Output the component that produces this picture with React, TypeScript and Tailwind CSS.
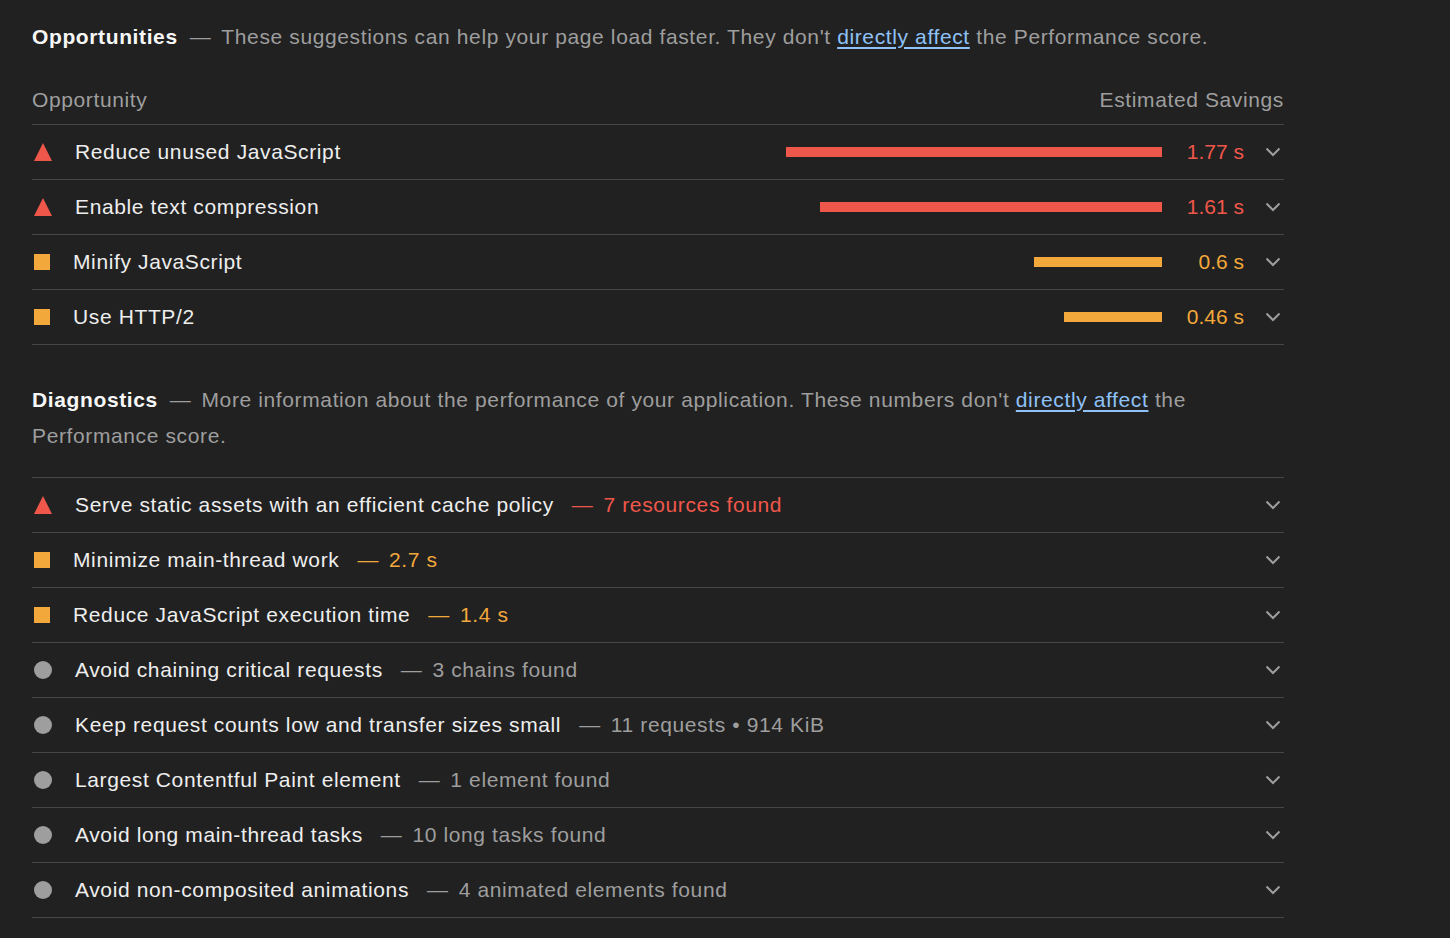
import type { ReactNode } from "react";

type Level = "fail" | "average" | "info";

const RED = "#f0574b";

const opportunities: { level: Level; title: string; bar: number; value: string }[] = [
  { level: "fail", title: "Reduce unused JavaScript", bar: 376, value: "1.77 s" },
  { level: "fail", title: "Enable text compression", bar: 342, value: "1.61 s" },
  { level: "average", title: "Minify JavaScript", bar: 128, value: "0.6 s" },
  { level: "average", title: "Use HTTP/2", bar: 98, value: "0.46 s" },
];

const diagnostics: { level: Level; title: string; detail: string }[] = [
  { level: "fail", title: "Serve static assets with an efficient cache policy", detail: "7 resources found" },
  { level: "average", title: "Minimize main-thread work", detail: "2.7 s" },
  { level: "average", title: "Reduce JavaScript execution time", detail: "1.4 s" },
  { level: "info", title: "Avoid chaining critical requests", detail: "3 chains found" },
  { level: "info", title: "Keep request counts low and transfer sizes small", detail: "11 requests • 914 KiB" },
  { level: "info", title: "Largest Contentful Paint element", detail: "1 element found" },
  { level: "info", title: "Avoid long main-thread tasks", detail: "10 long tasks found" },
  { level: "info", title: "Avoid non-composited animations", detail: "4 animated elements found" },
];

function LevelIcon({ level }: { level: Level }) {
  if (level === "fail") {
    return (
      <svg width="18" height="18" viewBox="0 0 18 18" className="ml-[2px] shrink-0">
        <polygon points="9,0 18,18 0,18" fill={RED} />
      </svg>
    );
  }
  if (level === "average") {
    return <span className="ml-[2px] block h-4 w-4 shrink-0 bg-[#f3a83b]" />;
  }
  return <span className="ml-[2px] block h-[18px] w-[18px] shrink-0 rounded-full bg-[#9e9e9e]" />;
}

function ChevronIcon() {
  return (
    <svg width="16" height="10" viewBox="0 0 16 10" fill="none" className="block">
      <path d="M1.5 1.5L8 8l6.5-6.5" stroke="#9e9e9e" strokeWidth="2" />
    </svg>
  );
}

function Row({ children }: { children: ReactNode }) {
  return <div className="flex h-[55px] items-center border-b border-[#464646]">{children}</div>;
}

function textColor(level: Level) {
  if (level === "fail") return "text-[#f0574b]";
  if (level === "average") return "text-[#f3a83b]";
  return "text-[#9e9e9e]";
}

function Link() {
  return <span className="text-[#8fc1f7] underline underline-offset-[3px]">directly affect</span>;
}

export default function App() {
  return (
    <div
      className="min-h-screen bg-[#212121] px-8 pt-[19px] text-[21px] tracking-[0.62px] text-[#eeeeee]"
      style={{ fontFamily: '"Liberation Sans", Arial, sans-serif' }}
    >
      <div className="w-[1252px]">
        <p className="leading-[36px] text-[#9e9e9e]">
          <span className="font-bold text-[#f7f7f7]">Opportunities</span>
          <span className="ml-[12px] mr-[10px]">—</span>
          These suggestions can help your page load faster. They don't <Link /> the Performance score.
        </p>

        <div className="mt-[20px] flex h-[50px] items-center justify-between border-b border-[#464646] text-[#9e9e9e]">
          <span>Opportunity</span>
          <span>Estimated Savings</span>
        </div>

        {opportunities.map((o) => (
          <Row key={o.title}>
            <LevelIcon level={o.level} />
            <span className="ml-[23px]">{o.title}</span>
            <div className="ml-auto flex items-center">
              <div
                className={o.level === "fail" ? "h-[10px] bg-[#f0574b]" : "h-[10px] bg-[#f3a83b]"}
                style={{ width: o.bar }}
              />
              <span className={`ml-[22px] w-[60px] text-right tracking-normal ${textColor(o.level)}`}>{o.value}</span>
              <div className="ml-[21px] mr-[3px]">
                <ChevronIcon />
              </div>
            </div>
          </Row>
        ))}

        <p className="mt-[37px] leading-[36px] text-[#9e9e9e]">
          <span className="font-bold text-[#f7f7f7]">Diagnostics</span>
          <span className="ml-[12px] mr-[10px]">—</span>
          More information about the performance of your application. These numbers don't <Link /> the
          Performance score.
        </p>

        <div className="mt-[23px] border-t border-[#464646]">
          {diagnostics.map((d) => (
            <Row key={d.title}>
              <LevelIcon level={d.level} />
              <span className="ml-[23px]">{d.title}</span>
              <span className={`ml-[18px] ${textColor(d.level)}`}>
                <span className="mr-[10px]">—</span>
                {d.detail}
              </span>
              <div className="ml-auto mr-[3px]">
                <ChevronIcon />
              </div>
            </Row>
          ))}
        </div>
      </div>
    </div>
  );
}
